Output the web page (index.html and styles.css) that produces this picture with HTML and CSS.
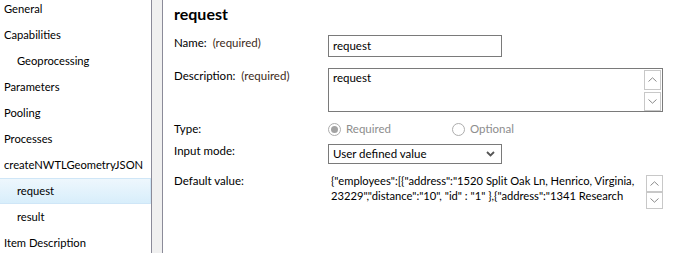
FILE: index.html
```html
<!DOCTYPE html>
<html lang="en">
<head>
    <meta charset="UTF-8">
    <title>Service Properties</title>
    <link rel="stylesheet" href="styles.css">
</head>
<body>
    <div class="window">
        <!-- Left navigation tree -->
        <ul class="nav">
            <li>General</li>
            <li>Capabilities</li>
            <li class="sub">Geoprocessing</li>
            <li>Parameters</li>
            <li>Pooling</li>
            <li>Processes</li>
            <li>createNWTLGeometryJSON</li>
            <li class="sub selected">request</li>
            <li class="sub">result</li>
            <li>Item Description</li>
        </ul>

        <div class="splitter"></div>

        <!-- Parameter properties -->
        <div class="main">
            <h1>request</h1>

            <div class="row row-name">
                <div class="label">Name:&nbsp; <span class="req">(required)</span></div>
                <div class="textbox name-box">request</div>
            </div>

            <div class="row row-desc">
                <div class="label">Description:&nbsp; <span class="req">(required)</span></div>
                <div class="textbox desc-box">
                    <span>request</span>
                    <div class="spin">
                        <div class="spin-btn">
                            <svg width="9" height="5" viewBox="0 0 9 5"><path d="M0.5 4.5 L4.5 0.8 L8.5 4.5" fill="none" stroke="#8a8a8a" stroke-width="1"/></svg>
                        </div>
                        <div class="spin-btn">
                            <svg width="9" height="5" viewBox="0 0 9 5"><path d="M0.5 0.5 L4.5 4.2 L8.5 0.5" fill="none" stroke="#8a8a8a" stroke-width="1"/></svg>
                        </div>
                    </div>
                </div>
            </div>

            <div class="row row-type">
                <div class="label">Type:</div>
                <div class="radios">
                    <span class="radio"><span class="circle checked"></span>Required</span>
                    <span class="radio"><span class="circle"></span>Optional</span>
                </div>
            </div>

            <div class="row row-mode">
                <div class="label">Input mode:</div>
                <div class="textbox select-box">
                    <span>User defined value</span>
                    <svg width="9" height="6" viewBox="0 0 9 6"><path d="M1 1 L4.5 4.5 L8 1" fill="none" stroke="#555" stroke-width="1.8"/></svg>
                </div>
            </div>

            <div class="row row-default">
                <div class="label">Default value:</div>
                <div class="default-value">
                    <p>{"employees":[{"address":"1520 Split Oak Ln, Henrico, Virginia,<br>23229","distance":"10", "id" : "1" },{"address":"1341 Research</p>
                    <div class="spin">
                        <div class="spin-btn">
                            <svg width="9" height="5" viewBox="0 0 9 5"><path d="M0.5 4.5 L4.5 0.8 L8.5 4.5" fill="none" stroke="#8a8a8a" stroke-width="1"/></svg>
                        </div>
                        <div class="spin-btn">
                            <svg width="9" height="5" viewBox="0 0 9 5"><path d="M0.5 0.5 L4.5 4.2 L8.5 0.5" fill="none" stroke="#8a8a8a" stroke-width="1"/></svg>
                        </div>
                    </div>
                </div>
            </div>
        </div>
    </div>
</body>
</html>
```

FILE: styles.css
```css
body {
    margin: 0;
    font-family: Lato, "Noto Sans", sans-serif;
    font-size: 11px;
    color: #000;
    background-color: #fff;
}

.window {
    display: flex;
    height: 253px;
    overflow: hidden;
}

/* navigation tree */
.nav {
    width: 151px;
    flex-shrink: 0;
    list-style: none;
    margin: -4px 0 0 0;
    padding: 0;
    font-size: 11.2px;
}

.nav li {
    height: 26px;
    line-height: 26px;
    padding-left: 4px;
    white-space: nowrap;
}

.nav li.sub {
    padding-left: 17px;
}

.nav li.selected {
    height: 24px;
    line-height: 24px;
    border: 1px solid #cfe6f7;
    border-left: none;
    background: linear-gradient(#eef7fd, #d8eefb);
}

.splitter {
    width: 10px;
    flex-shrink: 0;
    background-color: #f0f0f0;
    border-left: 1px solid #8b8b99;
    border-right: 1px solid #8b8b99;
}

/* property page */
.main {
    flex: 1;
    padding-left: 11px;
    font-size: 11.5px;
}

h1 {
    margin: 4px 0 0 0;
    font-size: 16px;
    line-height: 20px;
    font-weight: bold;
}

.row {
    display: flex;
    align-items: flex-start;
}

.label {
    width: 154px;
    flex-shrink: 0;
    line-height: 16px;
    white-space: nowrap;
}

.req {
    color: #3d2a18;
}

.textbox {
    box-sizing: border-box;
    border: 1px solid #7a7a7a;
    padding-left: 4px;
    background-color: #fff;
}

.row-name {
    margin-top: 11px;
}

.name-box {
    width: 174px;
    height: 22px;
    line-height: 19px;
}

.row-desc {
    margin-top: 11px;
}

.desc-box {
    width: 335px;
    height: 44px;
    display: flex;
    justify-content: space-between;
    line-height: 18px;
    padding-right: 1px;
}

.spin {
    display: flex;
    flex-direction: column;
    gap: 2px;
    padding-top: 1px;
}

.spin-btn {
    width: 15px;
    height: 17px;
    border: 1px solid #c8c8c8;
    display: flex;
    align-items: center;
    justify-content: center;
}

.desc-box .spin-btn {
    height: 18px;
}

.row-type {
    margin-top: 9px;
    line-height: 16px;
}

.radios {
    display: flex;
    color: #8d8d8d;
}

.radio {
    display: flex;
    align-items: center;
    width: 124px;
}

.circle {
    box-sizing: border-box;
    width: 13px;
    height: 13px;
    border: 1px solid #adadad;
    border-radius: 50%;
    margin-right: 5px;
    display: flex;
    align-items: center;
    justify-content: center;
}

.circle.checked::after {
    content: "";
    width: 7px;
    height: 7px;
    border-radius: 50%;
    background-color: #a3a3a3;
}

.row-mode {
    margin-top: 7px;
}

.row-mode .label {
    margin-top: -1px;
}

.select-box {
    width: 174px;
    height: 20px;
    line-height: 18px;
    display: flex;
    justify-content: space-between;
    align-items: center;
    padding-right: 6px;
}

.row-default {
    margin-top: 9px;
}

.default-value {
    display: flex;
    align-items: flex-start;
    padding-left: 3px;
}

.default-value p {
    margin: 0;
    width: 315px;
    line-height: 15px;
    font-size: 11.2px;
    white-space: nowrap;
    overflow: hidden;
}

.default-value .spin {
    margin-left: 0;
    gap: 0;
    padding-top: 2px;
}

.default-value .spin-btn {
    height: 15px;
}
```
